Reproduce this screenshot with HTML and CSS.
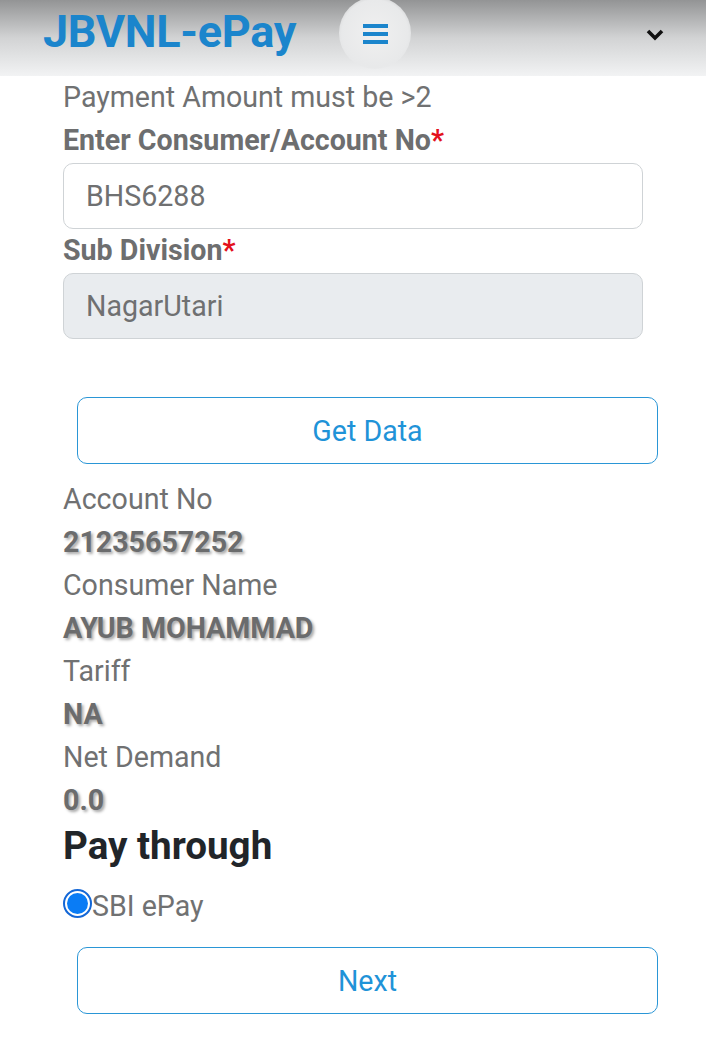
FILE: index.html
```html
<!DOCTYPE html>
<html lang="en">
<head>
  <meta charset="UTF-8">
  <meta name="viewport" content="width=device-width, initial-scale=1.0">
  <title>JBVNL-ePay</title>
  <link rel="stylesheet" href="styles.css">
</head>
<body>
  <!-- Top bar -->
  <header class="topbar">
    <span class="brand">JBVNL-ePay</span>
    <span class="menu-btn">
      <svg width="25" height="20" viewBox="0 0 25 20"><rect x="0" y="0" width="25" height="4" fill="#1b85cc"/><rect x="0" y="8" width="25" height="4" fill="#1b85cc"/><rect x="0" y="16" width="25" height="4" fill="#1b85cc"/></svg>
    </span>
    <span class="chevron">
      <svg width="18" height="12" viewBox="0 0 18 12"><path d="M2 2 L9 9 L16 2" fill="none" stroke="#111" stroke-width="3.6"/></svg>
    </span>
  </header>

  <main class="content">
    <div class="note">Payment Amount must be &gt;2</div>

    <label class="field-label" for="consumerNo">Enter Consumer/Account No<span class="req">*</span></label>
    <input class="field" type="text" id="consumerNo" value="BHS6288">

    <label class="field-label" for="subDivision">Sub Division<span class="req">*</span></label>
    <input class="field" type="text" id="subDivision" value="NagarUtari" disabled>

    <button class="btn-outline get-data">Get Data</button>

    <!-- Consumer details -->
    <dl class="details">
      <dt>Account No</dt>
      <dd>21235657252</dd>
      <dt>Consumer Name</dt>
      <dd>AYUB MOHAMMAD</dd>
      <dt>Tariff</dt>
      <dd>NA</dd>
      <dt>Net Demand</dt>
      <dd>0.0</dd>
    </dl>

    <h2 class="pay-title">Pay through</h2>
    <label class="radio-row">
      <span class="radio"><span class="radio-dot"></span></span>SBI ePay
    </label>

    <button class="btn-outline next">Next</button>
  </main>
</body>
</html>
```

FILE: styles.css
```css
body {
  margin: 0;
  font-family: Roboto, "Liberation Sans", sans-serif;
  background: #fff;
  color: #707172;
}
.topbar {
  height: 76px;
  background: linear-gradient(180deg, #939495 0%, #d2d3d4 50%, #f2f3f4 100%);
  display: flex;
  align-items: flex-start;
  position: relative;
}
.brand {
  margin-left: 43px;
  margin-top: 7px;
  font-size: 45px;
  font-weight: 700;
  color: #1b85cc;
  letter-spacing: -0.3px;
  line-height: 50px;
}
.menu-btn {
  position: absolute;
  left: 339px;
  top: -3px;
  width: 72px;
  height: 72px;
  border-radius: 50%;
  background: radial-gradient(circle, #f0f0f0 0%, #e8e9ea 65%, rgba(225,226,227,0) 100%);
  display: flex;
  align-items: center;
  justify-content: center;
}
.menu-btn svg {
  margin-top: 1px;
}
.chevron {
  position: absolute;
  left: 646px;
  top: 26px;
}
.content {
  padding: 0 63px;
  width: 580px;
}
.note {
  font-size: 28.6px;
  line-height: 43px;
}
.field-label {
  display: block;
  font-size: 28.6px;
  font-weight: 700;
  line-height: 43px;
  color: #6d6e6f;
}
.req {
  color: #e3111c;
}
.field {
  display: block;
  box-sizing: border-box;
  width: 580px;
  height: 66px;
  margin: 1px 0 0;
  padding: 0 22px;
  border: 1.5px solid #cfd3d6;
  border-radius: 10px;
  font-family: inherit;
  font-size: 28.6px;
  color: #6f7071;
  background: #fff;
}
.field:disabled {
  background: #e9ecef;
  color: #6f7071;
}
.btn-outline {
  display: block;
  box-sizing: border-box;
  width: 581px;
  height: 67px;
  margin-left: 14px;
  border: 1.5px solid #2a96d6;
  border-radius: 10px;
  background: #fff;
  color: #1f93d8;
  font-family: inherit;
  font-size: 28.6px;
}
.get-data {
  margin-top: 58px;
}
.details {
  margin: 14px 0 0;
}
.details dt,
.details dd {
  margin: 0;
  font-size: 28.6px;
  line-height: 43px;
}
.details dd {
  font-weight: 700;
  color: #6b6c6d;
  text-shadow: 2px 2px 3px rgba(0, 0, 0, 0.35);
}
.pay-title {
  margin: 0;
  font-size: 38.6px;
  font-weight: 700;
  line-height: 48px;
  color: #212529;
}
.radio-row {
  display: flex;
  align-items: center;
  margin-top: 16px;
  height: 40px;
  font-size: 28.6px;
  color: #707172;
}
.radio {
  box-sizing: border-box;
  width: 29px;
  height: 29px;
  border: 2px solid #1467d6;
  border-radius: 50%;
  background: #fff;
  display: flex;
  align-items: center;
  justify-content: center;
  margin-top: -5px;
}
.radio-dot {
  width: 21px;
  height: 21px;
  border-radius: 50%;
  background: #0a7cf5;
}
.next {
  margin-top: 21px;
}
```
